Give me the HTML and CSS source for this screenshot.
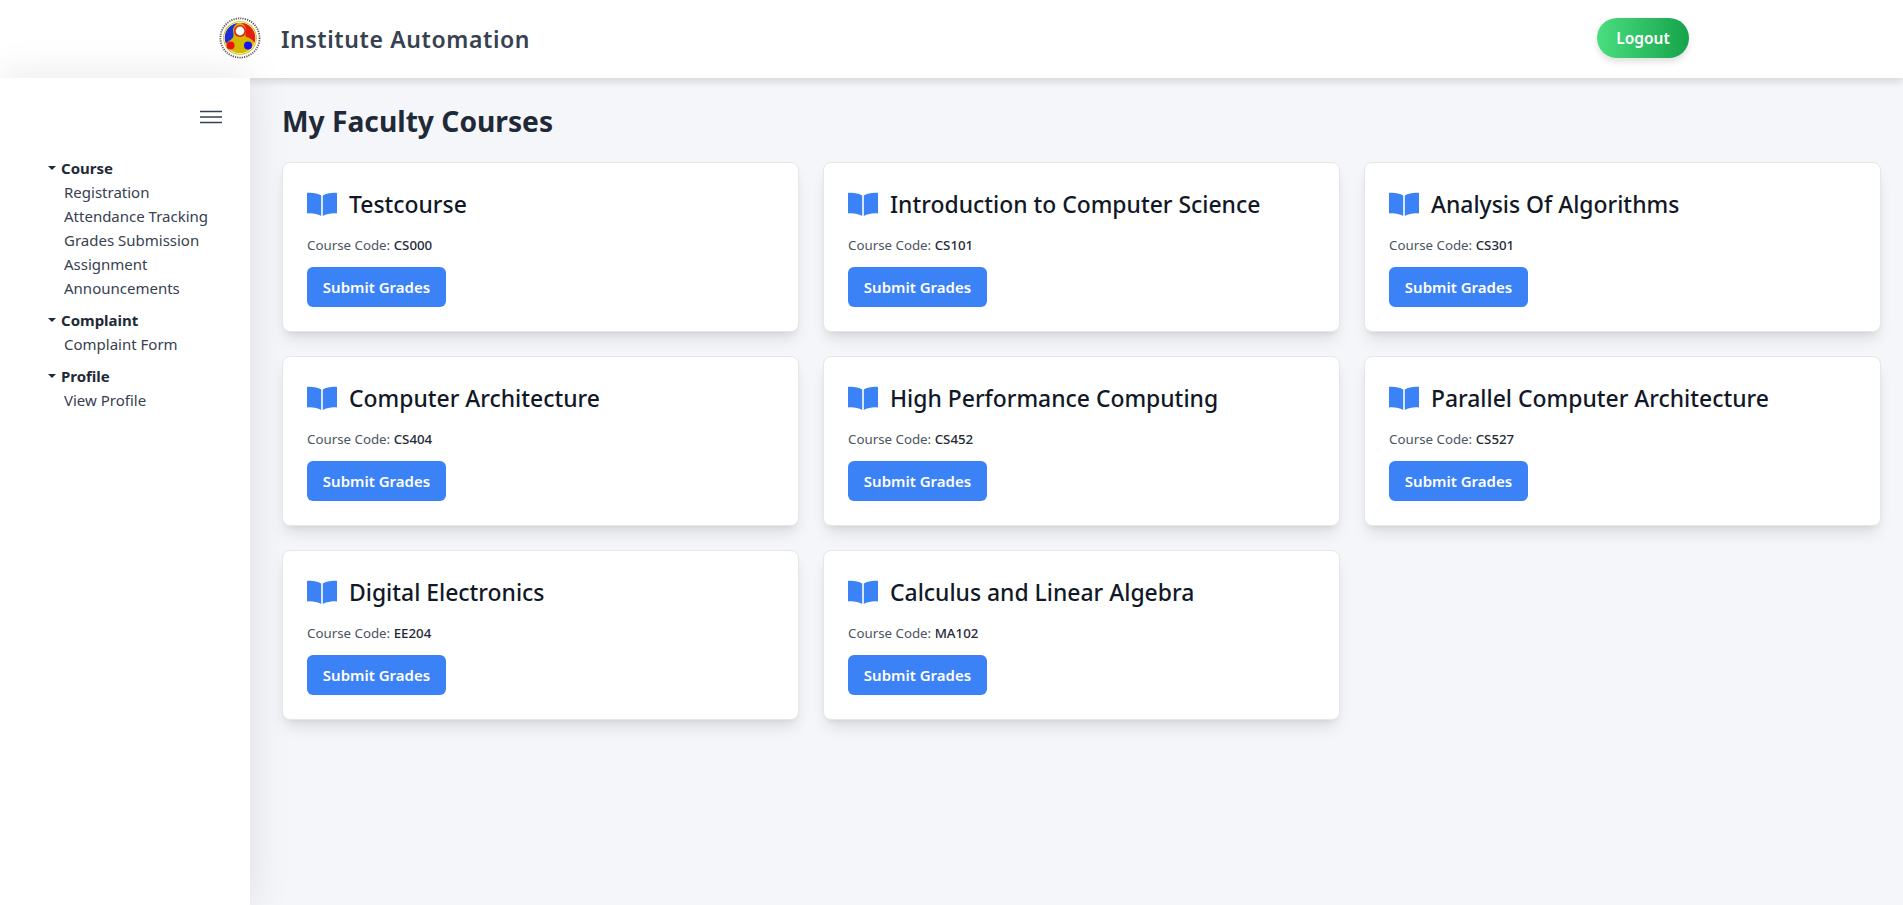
FILE: index.html
```html
<!DOCTYPE html>
<html lang="en">
<head>
<meta charset="utf-8">
<title>Institute Automation</title>
<link rel="stylesheet" href="styles.css">
</head>
<body>
<header class="topbar">
  <div class="brand">
    <svg class="logo" viewBox="0 0 42 42" aria-hidden="true">
      <circle cx="21" cy="21" r="19.600" fill="none" stroke="#5a5a5a" stroke-width="1.800" stroke-dasharray="1.200 1.100"/>
      <circle cx="21" cy="21" r="16.800" fill="#d4b800"/>
      <circle cx="21" cy="21" r="15.900" fill="#fff"/>
      <circle cx="21" cy="21" r="15.200" fill="#d4b800"/>
      <path d="M19 5.900A15.200 15.200 0 0 0 5.800 22C5.800 23.500 6.200 25 7 26.500C8.500 24.500 11.500 23.500 13.500 21C15.500 19 14 15.500 14 13C14 10 16 8 19 5.900Z" fill="#1f2fd8"/>
      <path d="M22 5.800A15.200 15.200 0 0 1 36.200 22C36.200 23.500 35.800 24.500 35.400 25.500C33.500 22.500 30.500 21 27.500 20C25.500 19.500 27 16 27 13C27 10 25 7.500 22 5.800Z" fill="#e3200f"/>
      <circle cx="21" cy="14" r="6" fill="#e3200f"/>
      <circle cx="21" cy="14" r="4.400" fill="#fff"/>
      <circle cx="11.500" cy="28.500" r="4" fill="#ee1111"/>
      <circle cx="29" cy="28.500" r="4" fill="#1414ee"/>
    </svg>
    <span class="brand-name">Institute Automation</span>
  </div>
  <button class="logout">Logout</button>
</header>
<div class="shell">
  <aside class="sidebar">
    <div class="menu-row">
      <svg class="burger" viewBox="0 0 22 14" aria-hidden="true">
        <path d="M0 1.500H22M0 7H22M0 12.500H22" stroke="#374151" stroke-width="1.700" fill="none"/>
      </svg>
    </div>
    <nav class="nav">
      <section class="nav-group">
        <h3 class="nav-title"><span class="caret"></span>Course</h3>
        <a class="nav-link">Registration</a>
        <a class="nav-link">Attendance Tracking</a>
        <a class="nav-link">Grades Submission</a>
        <a class="nav-link">Assignment</a>
        <a class="nav-link">Announcements</a>
      </section>
      <section class="nav-group">
        <h3 class="nav-title"><span class="caret"></span>Complaint</h3>
        <a class="nav-link">Complaint Form</a>
      </section>
      <section class="nav-group">
        <h3 class="nav-title"><span class="caret"></span>Profile</h3>
        <a class="nav-link">View Profile</a>
      </section>
    </nav>
  </aside>
  <main class="main">
    <h1 class="page-title">My Faculty Courses</h1>
    <div class="grid">
      <article class="card">
        <h2 class="card-title"><svg class="book" viewBox="0 0 30 24"><path d="M.6 .8C5 .4 10.500 1 14.200 3.400V24C10.500 21.800 5 21 .6 21.400C.2 21.400 0 21.200 0 20.800V1.400C0 1 .2 .8 .6 .8ZM29.400 .8C25 .4 19.500 1 15.800 3.400V24C19.500 21.800 25 21 29.400 21.400C29.800 21.400 30 21.200 30 20.800V1.400C30 1 29.800 .8 29.400 .8Z"/></svg>Testcourse</h2>
        <p class="code">Course Code: <b>CS000</b></p>
        <button class="submit">Submit Grades</button>
      </article>
      <article class="card">
        <h2 class="card-title"><svg class="book" viewBox="0 0 30 24"><path d="M.6 .8C5 .4 10.500 1 14.200 3.400V24C10.500 21.800 5 21 .6 21.400C.2 21.400 0 21.200 0 20.800V1.400C0 1 .2 .8 .6 .8ZM29.400 .8C25 .4 19.500 1 15.800 3.400V24C19.500 21.800 25 21 29.400 21.400C29.800 21.400 30 21.200 30 20.800V1.400C30 1 29.800 .8 29.400 .8Z"/></svg>Introduction to Computer Science</h2>
        <p class="code">Course Code: <b>CS101</b></p>
        <button class="submit">Submit Grades</button>
      </article>
      <article class="card">
        <h2 class="card-title"><svg class="book" viewBox="0 0 30 24"><path d="M.6 .8C5 .4 10.500 1 14.200 3.400V24C10.500 21.800 5 21 .6 21.400C.2 21.400 0 21.200 0 20.800V1.400C0 1 .2 .8 .6 .8ZM29.400 .8C25 .4 19.500 1 15.800 3.400V24C19.500 21.800 25 21 29.400 21.400C29.800 21.400 30 21.200 30 20.800V1.400C30 1 29.800 .8 29.400 .8Z"/></svg>Analysis Of Algorithms</h2>
        <p class="code">Course Code: <b>CS301</b></p>
        <button class="submit">Submit Grades</button>
      </article>
      <article class="card">
        <h2 class="card-title"><svg class="book" viewBox="0 0 30 24"><path d="M.6 .8C5 .4 10.500 1 14.200 3.400V24C10.500 21.800 5 21 .6 21.400C.2 21.400 0 21.200 0 20.800V1.400C0 1 .2 .8 .6 .8ZM29.400 .8C25 .4 19.500 1 15.800 3.400V24C19.500 21.800 25 21 29.400 21.400C29.800 21.400 30 21.200 30 20.800V1.400C30 1 29.800 .8 29.400 .8Z"/></svg>Computer Architecture</h2>
        <p class="code">Course Code: <b>CS404</b></p>
        <button class="submit">Submit Grades</button>
      </article>
      <article class="card">
        <h2 class="card-title"><svg class="book" viewBox="0 0 30 24"><path d="M.6 .8C5 .4 10.500 1 14.200 3.400V24C10.500 21.800 5 21 .6 21.400C.2 21.400 0 21.200 0 20.800V1.400C0 1 .2 .8 .6 .8ZM29.400 .8C25 .4 19.500 1 15.800 3.400V24C19.500 21.800 25 21 29.400 21.400C29.800 21.400 30 21.200 30 20.800V1.400C30 1 29.800 .8 29.400 .8Z"/></svg>High Performance Computing</h2>
        <p class="code">Course Code: <b>CS452</b></p>
        <button class="submit">Submit Grades</button>
      </article>
      <article class="card">
        <h2 class="card-title"><svg class="book" viewBox="0 0 30 24"><path d="M.6 .8C5 .4 10.500 1 14.200 3.400V24C10.500 21.800 5 21 .6 21.400C.2 21.400 0 21.200 0 20.800V1.400C0 1 .2 .8 .6 .8ZM29.400 .8C25 .4 19.500 1 15.800 3.400V24C19.500 21.800 25 21 29.400 21.400C29.800 21.400 30 21.200 30 20.800V1.400C30 1 29.800 .8 29.400 .8Z"/></svg>Parallel Computer Architecture</h2>
        <p class="code">Course Code: <b>CS527</b></p>
        <button class="submit">Submit Grades</button>
      </article>
      <article class="card">
        <h2 class="card-title"><svg class="book" viewBox="0 0 30 24"><path d="M.6 .8C5 .4 10.500 1 14.200 3.400V24C10.500 21.800 5 21 .6 21.400C.2 21.400 0 21.200 0 20.800V1.400C0 1 .2 .8 .6 .8ZM29.400 .8C25 .4 19.500 1 15.800 3.400V24C19.500 21.800 25 21 29.400 21.400C29.800 21.400 30 21.200 30 20.800V1.400C30 1 29.800 .8 29.400 .8Z"/></svg>Digital Electronics</h2>
        <p class="code">Course Code: <b>EE204</b></p>
        <button class="submit">Submit Grades</button>
      </article>
      <article class="card">
        <h2 class="card-title"><svg class="book" viewBox="0 0 30 24"><path d="M.6 .8C5 .4 10.500 1 14.200 3.400V24C10.500 21.800 5 21 .6 21.400C.2 21.400 0 21.200 0 20.800V1.400C0 1 .2 .8 .6 .8ZM29.400 .8C25 .4 19.500 1 15.800 3.400V24C19.500 21.800 25 21 29.400 21.400C29.800 21.400 30 21.200 30 20.800V1.400C30 1 29.800 .8 29.400 .8Z"/></svg>Calculus and Linear Algebra</h2>
        <p class="code">Course Code: <b>MA102</b></p>
        <button class="submit">Submit Grades</button>
      </article>
    </div>
  </main>
</div>
</body>
</html>
```
FILE: styles.css
```css
* { box-sizing: border-box; }
html, body { height: 100%; }
body {
  margin: 0;
  display: flex;
  flex-direction: column;
  font-family: "Noto Sans", "Open Sans", sans-serif;
  background: #f5f6fa;
  color: #111827;
  overflow: hidden;
}
.topbar {
  height: 78px;
  flex: none;
  display: flex;
  align-items: center;
  justify-content: space-between;
  padding: 0 214px 2px 219px;
  background: #fff;
  box-shadow: 0 4px 8px rgba(0, 0, 0, .12);
  position: relative;
  z-index: 1;
}
.brand { display: flex; align-items: center; gap: 20px; }
.logo { width: 42px; height: 42px; display: block; }
.brand-name {
  padding-top: 2px;
  font-size: 23px;
  font-weight: 600;
  letter-spacing: .6px;
  color: #374151;
}
.logout {
  width: 92px;
  height: 40px;
  border: 0;
  border-radius: 20px;
  background: linear-gradient(to right, #4ade80, #16a34a);
  color: #fff;
  font: 600 15.500px "Noto Sans", sans-serif;
  box-shadow: 0 4px 6px rgba(0, 0, 0, .12);
}
.shell { flex: 1; display: flex; min-height: 0; }
.sidebar {
  width: 250px;
  flex: none;
  background: #fff;
  box-shadow: 0 0 40px rgba(0, 0, 0, .1);
  padding-top: 32px;
  position: relative;
  z-index: 2;
}
.menu-row { display: flex; justify-content: flex-end; padding-right: 28px; }
.burger { width: 22px; height: 14px; display: block; }
.nav { margin-top: 32px; padding-left: 48px; }
.nav-group { margin-bottom: 8px; }
.nav-title {
  margin: 0;
  display: flex;
  align-items: center;
  font-size: 15px;
  line-height: 24px;
  font-weight: 700;
  color: #1f2937;
}
.caret {
  width: 0;
  height: 0;
  margin-right: 5px;
  border-left: 4px solid transparent;
  border-right: 4px solid transparent;
  border-top: 4px solid #1f2937;
}
.nav-link {
  display: block;
  padding-left: 16px;
  font-size: 15px;
  line-height: 24px;
  color: #374151;
}
.main { flex: 1; min-width: 0; padding: 25px 22px 0 32px; }
.page-title {
  margin: 0 0 23px;
  font-size: 28.200px;
  line-height: 36px;
  font-weight: 700;
  color: #1f2937;
}
.grid { display: grid; grid-template-columns: repeat(3, 1fr); gap: 24px; }
.card {
  height: 170px;
  padding: 26px 24px 0;
  background: #fff;
  border: 1px solid #e5e7eb;
  border-radius: 8px;
  box-shadow: 0 10px 15px -3px rgba(0, 0, 0, .1), 0 4px 6px -4px rgba(0, 0, 0, .1);
}
.card-title {
  margin: 0;
  display: flex;
  align-items: center;
  gap: 12px;
  font-size: 22.900px;
  line-height: 32px;
  font-weight: 500;
  color: #111827;
}
.book { width: 30px; height: 24px; fill: #3b82f6; flex: none; margin-top: -2px; }
.code {
  margin: 14px 0 0;
  font-size: 13.300px;
  line-height: 20px;
  color: #4b5563;
}
.code b { font-weight: 500; color: #1f2937; }
.submit {
  display: block;
  margin-top: 12px;
  width: 139px;
  height: 40px;
  border: 0;
  border-radius: 6px;
  background: #3b82f6;
  color: #fff;
  font: 600 15px "Noto Sans", sans-serif;
}
```
